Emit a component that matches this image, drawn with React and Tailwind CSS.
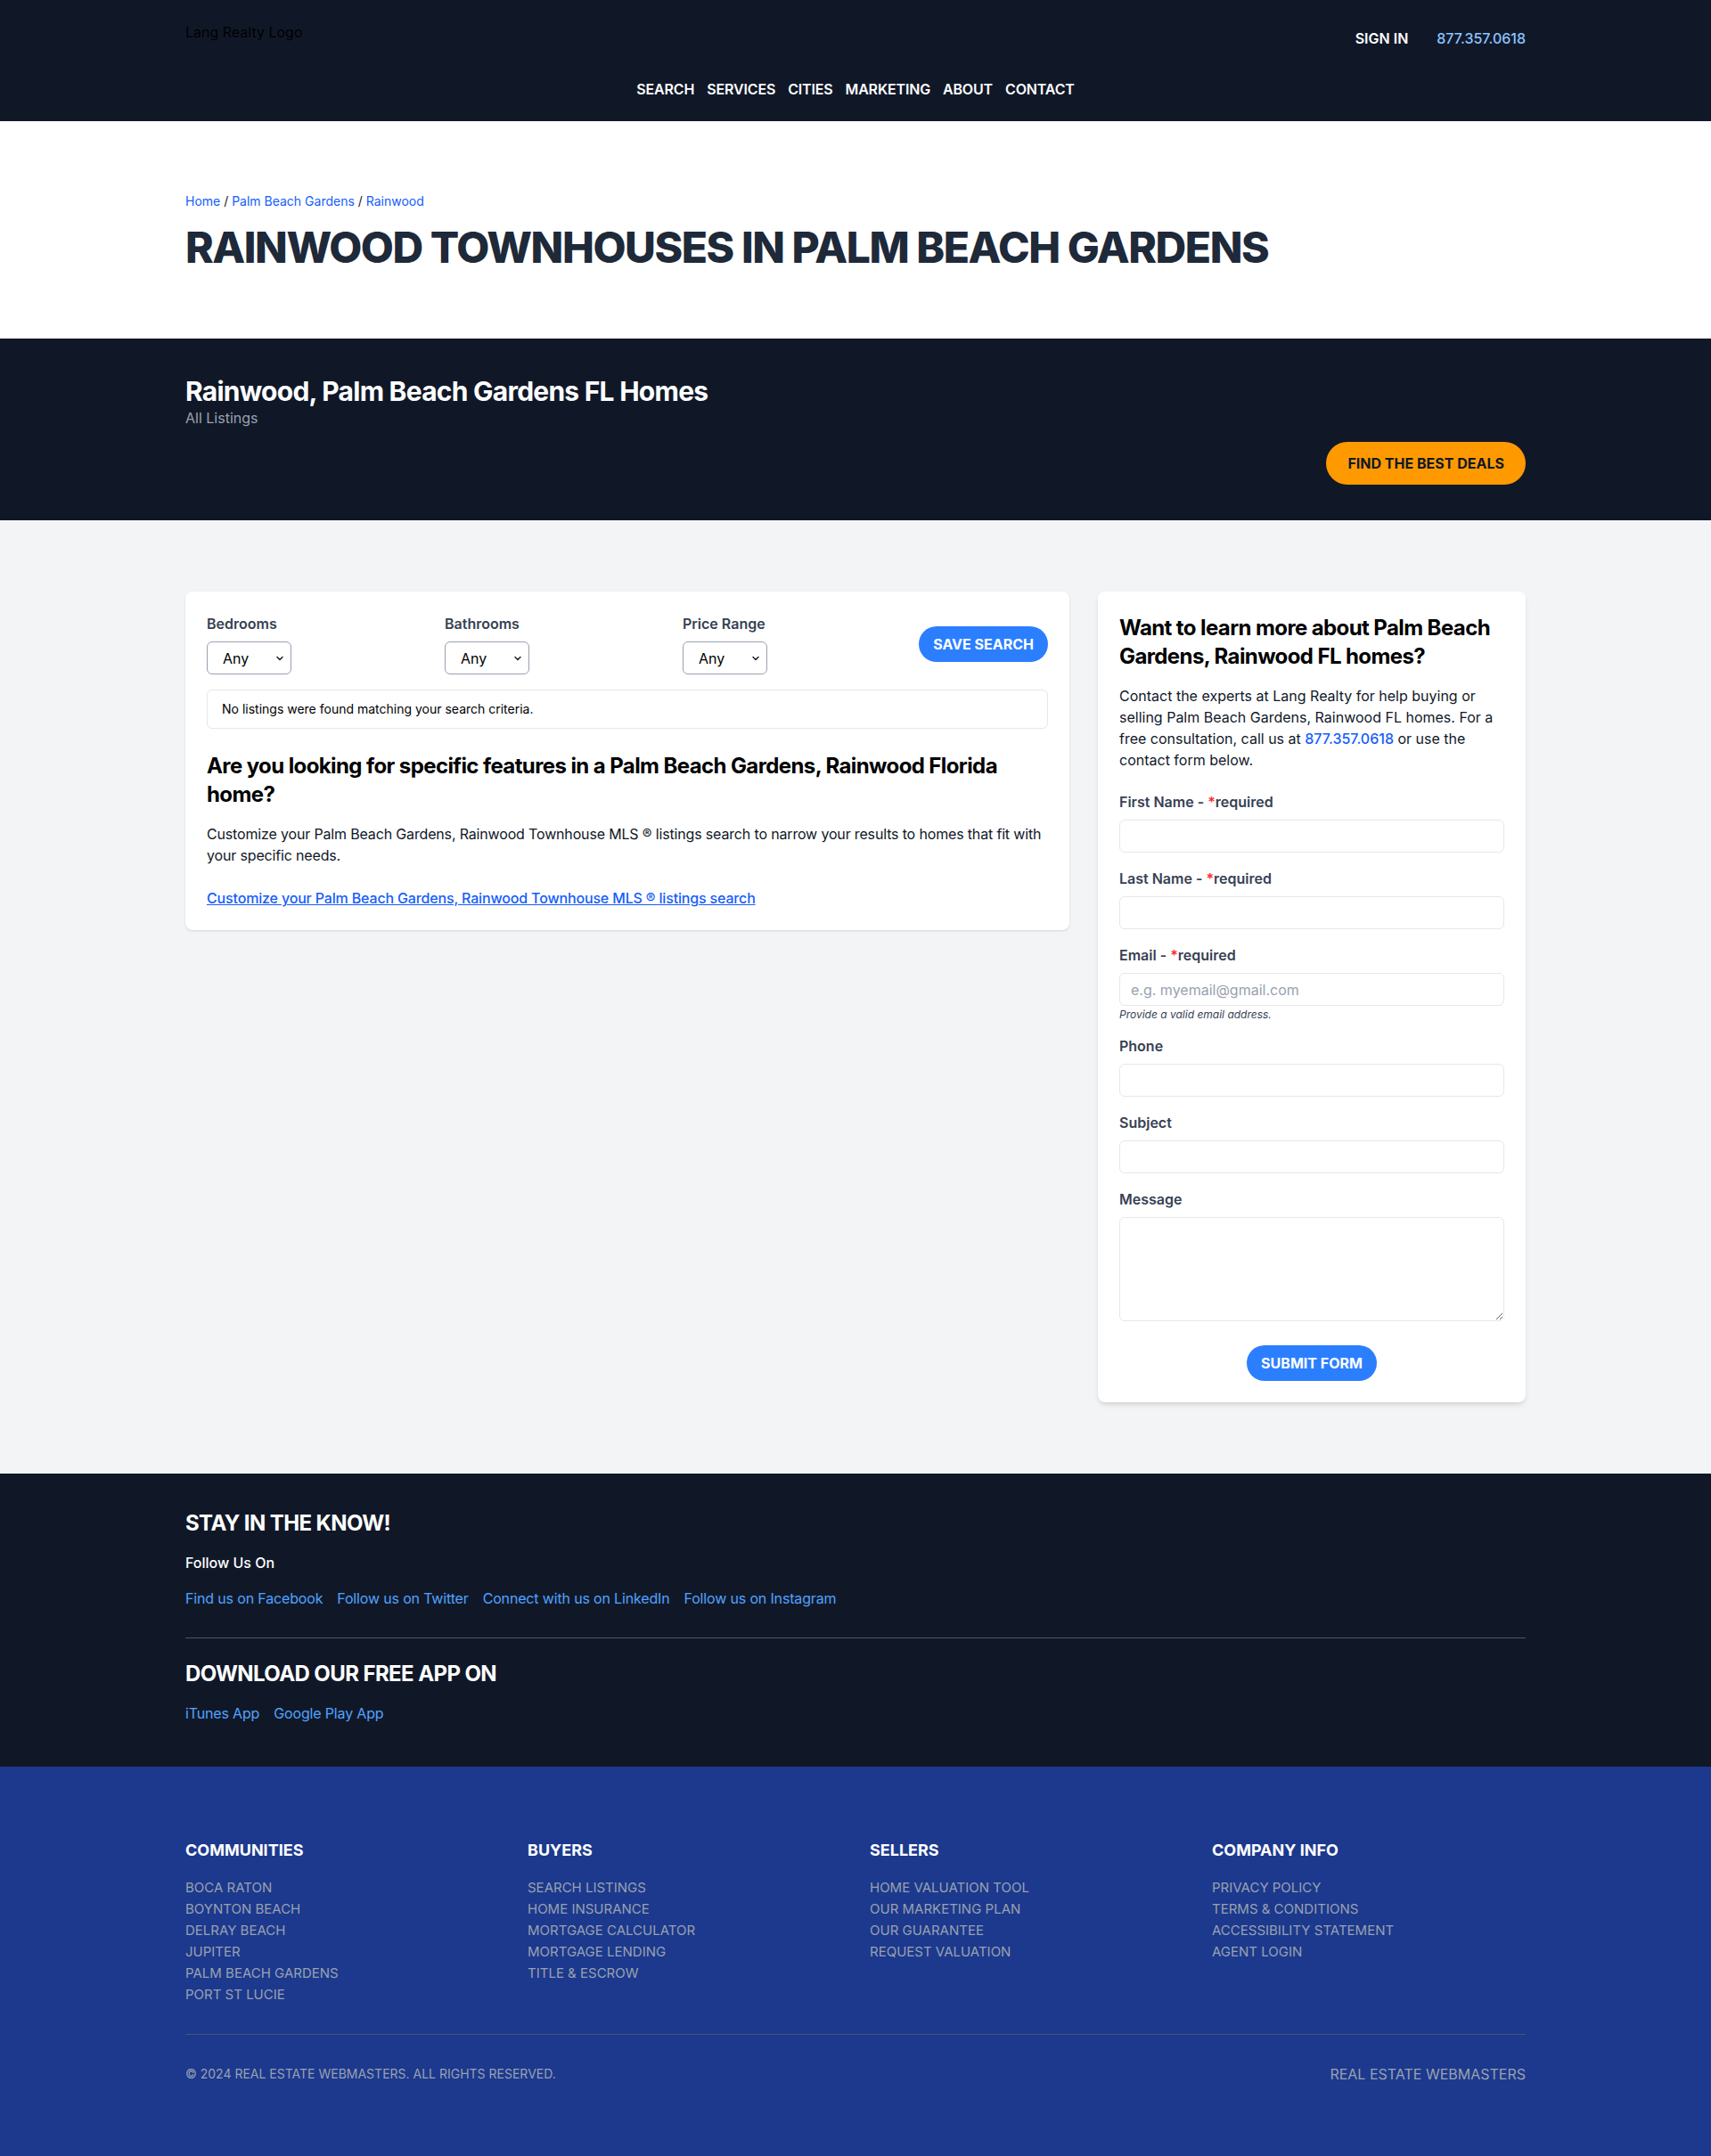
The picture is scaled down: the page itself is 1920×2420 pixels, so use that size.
import React from "react";

function Chevron() {
  return (
    <svg className="pointer-events-none absolute right-[8px] top-1/2 -translate-y-1/2" width="10" height="10" viewBox="0 0 10 10" fill="none">
      <path d="M2 3.5 L5 6.5 L8 3.5" stroke="#111827" strokeWidth="1.4" strokeLinecap="round" strokeLinejoin="round" />
    </svg>
  );
}

function FilterSelect({ label, className }) {
  return (
    <div className={className}>
      <div className="text-base leading-6 font-semibold text-gray-700">{label}</div>
      <div className="relative mt-2 w-[95px]">
        <select className="appearance-none w-[95px] h-[37px] rounded-md border border-gray-400 bg-white pl-[17px] text-base text-black outline-none">
          <option>Any</option>
        </select>
        <Chevron />
      </div>
    </div>
  );
}

function Field({ label, required, children, last }) {
  return (
    <div className={last ? "" : "mb-[17px]"}>
      <div className="text-base leading-6 font-semibold text-gray-700 mb-2">
        {label}
        {required && (
          <>
            {" - "}
            <span className="text-red-500">*</span>required
          </>
        )}
      </div>
      {children}
    </div>
  );
}

const inputCls =
  "block w-full h-[37px] rounded-md border border-gray-200 bg-white px-3 text-base text-gray-900 placeholder:text-gray-400 outline-none";

export default function App() {
  const communities = ["BOCA RATON", "BOYNTON BEACH", "DELRAY BEACH", "JUPITER", "PALM BEACH GARDENS", "PORT ST LUCIE"];
  const buyers = ["SEARCH LISTINGS", "HOME INSURANCE", "MORTGAGE CALCULATOR", "MORTGAGE LENDING", "TITLE & ESCROW"];
  const sellers = ["HOME VALUATION TOOL", "OUR MARKETING PLAN", "OUR GUARANTEE", "REQUEST VALUATION"];
  const company = ["PRIVACY POLICY", "TERMS & CONDITIONS", "ACCESSIBILITY STATEMENT", "AGENT LOGIN"];
  const cols = [
    ["COMMUNITIES", communities],
    ["BUYERS", buyers],
    ["SELLERS", sellers],
    ["COMPANY INFO", company],
  ];

  return (
    <div className="font-[Inter,sans-serif] bg-white">
      {/* Header */}
      <header className="bg-gray-900 pt-6 pb-6">
        <div className="w-[1504px] mx-auto">
          <div className="flex justify-between items-start">
            <div className="text-base leading-6 text-black">Lang Realty Logo</div>
            <div className="flex items-center gap-8 pt-[7px] text-base leading-6">
              <a className="font-semibold text-white">SIGN IN</a>
              <a className="font-medium text-blue-300">877.357.0618</a>
            </div>
          </div>
          <nav className="mt-[33px] flex justify-center gap-[14px] text-base leading-6 font-semibold tracking-[-0.01em] text-white">
            <a>SEARCH</a>
            <a>SERVICES</a>
            <a>CITIES</a>
            <a>MARKETING</a>
            <a>ABOUT</a>
            <a>CONTACT</a>
          </nav>
        </div>
      </header>

      {/* Title */}
      <section className="bg-white pt-20 pb-[78px]">
        <div className="w-[1504px] mx-auto">
          <div className="text-sm leading-5 text-gray-900">
            <a className="text-blue-600">Home</a> / <a className="text-blue-600">Palm Beach Gardens</a> /{" "}
            <a className="text-blue-600">Rainwood</a>
          </div>
          <h1 className="mt-[18px] text-5xl leading-none font-extrabold tracking-[-0.03em] text-gray-800">
            RAINWOOD TOWNHOUSES IN PALM BEACH GARDENS
          </h1>
        </div>
      </section>

      {/* Dark banner */}
      <section className="bg-gray-900 pt-[41px] pb-10">
        <div className="w-[1504px] mx-auto">
          <h2 className="text-3xl leading-9 font-bold tracking-tight text-white">Rainwood, Palm Beach Gardens FL Homes</h2>
          <div className="text-base leading-6 text-gray-400">All Listings</div>
          <div className="mt-[15px] flex justify-end">
            <button className="whitespace-nowrap rounded-full bg-amber-500 px-6 py-3 text-base leading-6 font-bold text-gray-900">
              FIND THE BEST DEALS
            </button>
          </div>
        </div>
      </section>

      {/* Main */}
      <section className="bg-gray-100 py-20">
        <div className="w-[1504px] mx-auto flex items-start gap-8">
          {/* Left card */}
          <div className="w-[992px] shrink-0 rounded-lg bg-white p-6 shadow-sm">
            <div className="flex items-center">
              <FilterSelect label="Bedrooms" className="w-[267px] shrink-0" />
              <FilterSelect label="Bathrooms" className="w-[267px] shrink-0" />
              <FilterSelect label="Price Range" className="shrink-0" />
              <button className="ml-auto shrink-0 whitespace-nowrap rounded-full bg-blue-500 px-4 py-2 text-base leading-6 font-bold text-white">
                SAVE SEARCH
              </button>
            </div>
            <div className="mt-[17px] rounded-md border border-gray-200 px-4 py-[11px] text-sm leading-5 text-black">
              No listings were found matching your search criteria.
            </div>
            <h3 className="mt-[26px] text-2xl leading-8 font-bold tracking-tight text-black">
              Are you looking for specific features in a Palm Beach Gardens, Rainwood Florida home?
            </h3>
            <p className="mt-4 text-base leading-6 tracking-[-0.01em] text-gray-900">
              Customize your Palm Beach Gardens, Rainwood Townhouse MLS ® listings search to narrow your results to homes that fit with your specific needs.
            </p>
            <a className="mt-6 block text-base leading-6 font-medium tracking-[-0.01em] text-blue-600 underline">
              Customize your Palm Beach Gardens, Rainwood Townhouse MLS ® listings search
            </a>
          </div>

          {/* Right card */}
          <div className="w-[480px] shrink-0 rounded-lg bg-white p-6 shadow-md">
            <h3 className="pt-px text-2xl leading-8 font-bold tracking-tight text-black">
              Want to learn more about Palm Beach Gardens, Rainwood FL homes?
            </h3>
            <p className="mt-4 text-base leading-6 text-gray-900">
              Contact the experts at Lang Realty for help buying or selling Palm Beach Gardens, Rainwood FL homes. For a free consultation, call us at{" "}
              <a className="font-medium text-blue-600">877.357.0618</a> or use the contact form below.
            </p>
            <div className="mt-[23px]">
              <Field label="First Name" required>
                <input className={inputCls} />
              </Field>
              <Field label="Last Name" required>
                <input className={inputCls} />
              </Field>
              <div className="mb-[15px]">
                <div className="text-base leading-6 font-semibold text-gray-700 mb-2">
                  Email - <span className="text-red-500">*</span>required
                </div>
                <input className={inputCls} placeholder="e.g. myemail@gmail.com" />
                <div className="mt-0.5 text-xs leading-4 italic text-gray-700">Provide a valid email address.</div>
              </div>
              <Field label="Phone">
                <input className={inputCls} />
              </Field>
              <Field label="Subject">
                <input className={inputCls} />
              </Field>
              <Field label="Message" last>
                <textarea className="block w-full h-[117px] rounded-md border border-gray-200 bg-white px-3 py-2 text-base outline-none" />
              </Field>
              <div className="mt-[27px] flex justify-center">
                <button className="whitespace-nowrap rounded-full bg-blue-500 px-4 py-2 text-base leading-6 font-bold text-white">
                  SUBMIT FORM
                </button>
              </div>
            </div>
          </div>
        </div>
      </section>

      {/* Stay in the know */}
      <section className="bg-gray-900 pt-10 pb-[48px]">
        <div className="w-[1504px] mx-auto">
          <h4 className="text-2xl leading-8 font-bold tracking-tight text-white">STAY IN THE KNOW!</h4>
          <div className="mt-4 text-base leading-6 font-medium text-white">Follow Us On</div>
          <div className="mt-4 flex gap-4 text-base leading-6 tracking-[-0.01em] text-blue-400">
            <a>Find us on Facebook</a>
            <a>Follow us on Twitter</a>
            <a>Connect with us on LinkedIn</a>
            <a>Follow us on Instagram</a>
          </div>
          <hr className="mt-8 border-0 border-t border-gray-600" />
          <h4 className="mt-6 text-2xl leading-8 font-bold tracking-tight text-white">DOWNLOAD OUR FREE APP ON</h4>
          <div className="mt-4 flex gap-4 text-base leading-6 tracking-[-0.01em] text-blue-400">
            <a>iTunes App</a>
            <a>Google Play App</a>
          </div>
        </div>
      </section>

      {/* Blue footer */}
      <footer className="bg-blue-900 pt-20 pb-20">
        <div className="w-[1504px] mx-auto">
          <div className="grid grid-cols-4 gap-8">
            {cols.map(([title, items]) => (
              <div key={title}>
                <div className="text-lg leading-7 font-bold text-white">{title}</div>
                <ul className="mt-4">
                  {items.map((it) => (
                    <li key={it} className="text-[15px] leading-6 text-gray-400">
                      {it}
                    </li>
                  ))}
                </ul>
              </div>
            ))}
          </div>
          <hr className="mt-8 border-0 border-t border-gray-600" />
          <div className="mt-8 flex items-center justify-between">
            <div className="text-sm leading-5 text-gray-400">© 2024 REAL ESTATE WEBMASTERS. ALL RIGHTS RESERVED.</div>
            <div className="text-base leading-6 text-gray-400">REAL ESTATE WEBMASTERS</div>
          </div>
        </div>
      </footer>
    </div>
  );
}
